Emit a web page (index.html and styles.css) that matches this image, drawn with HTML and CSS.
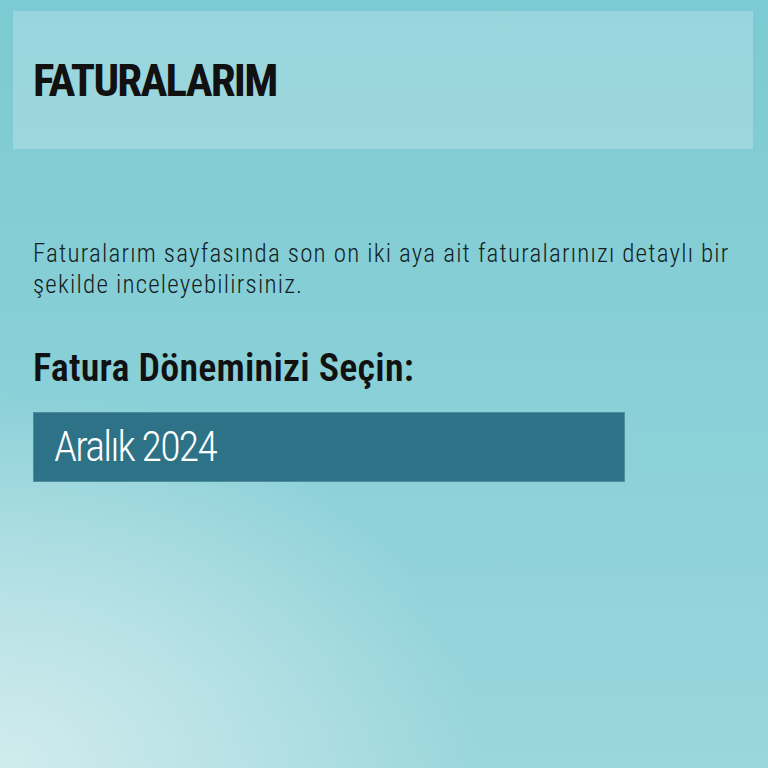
FILE: index.html
```html
<!DOCTYPE html>
<html lang="tr">
<head>
<meta charset="utf-8">
<title>Faturalarım</title>
<link rel="stylesheet" href="styles.css">
</head>
<body>
<div class="page">
  <header class="header">
    <h1 class="title">FATURALARIM</h1>
  </header>
  <main class="content">
    <p class="intro">Faturalarım sayfasında son on iki aya ait faturalarınızı detaylı bir şekilde inceleyebilirsiniz.</p>
    <h2 class="subtitle">Fatura Döneminizi Seçin:</h2>
    <div class="select">Aralık 2024</div>
  </main>
</div>
</body>
</html>
```
FILE: styles.css
```css
html, body {
  margin: 0;
  height: 100%;
}
body {
  font-family: Roboto, "Open Sans", sans-serif;
  font-stretch: 75%;
  color: #111;
  background:
    radial-gradient(ellipse 480px 380px at 0% 100%, rgba(212, 237, 238, 0.95) 0%, rgba(212, 237, 238, 0.55) 45%, rgba(212, 237, 238, 0) 100%),
    linear-gradient(180deg, #7ccad3 0%, #88cfd7 45%, #9ad6dc 100%);
  min-height: 768px;
}
.page {
  padding: 11px 15px 0 13px;
}
.header {
  height: 138px;
  display: flex;
  align-items: center;
  padding-left: 20px;
  background: rgba(255, 255, 255, 0.22);
}
.title {
  margin: 0;
  font-size: 45px;
  line-height: 1;
  font-weight: 700;
  letter-spacing: -1.8px;
}
.content {
  padding: 89px 12px 0 20px;
}
.intro {
  margin: 0;
  font-size: 25px;
  line-height: 31px;
  font-weight: 300;
  font-stretch: 85%;
  letter-spacing: 1.2px;
  color: #141e22;
}
.subtitle {
  margin: 46px 0 0;
  font-size: 38px;
  line-height: 1.2;
  font-weight: 600;
  letter-spacing: 0.2px;
}
.select {
  margin-top: 20px;
  width: 592px;
  height: 70px;
  box-sizing: border-box;
  display: flex;
  align-items: center;
  padding-left: 20px;
  background: #2e7287;
  border: 1px solid #4f8c9c;
  color: #fff;
  font-size: 42px;
  font-weight: 300;
  line-height: 1;
  letter-spacing: -1.8px;
}
```
